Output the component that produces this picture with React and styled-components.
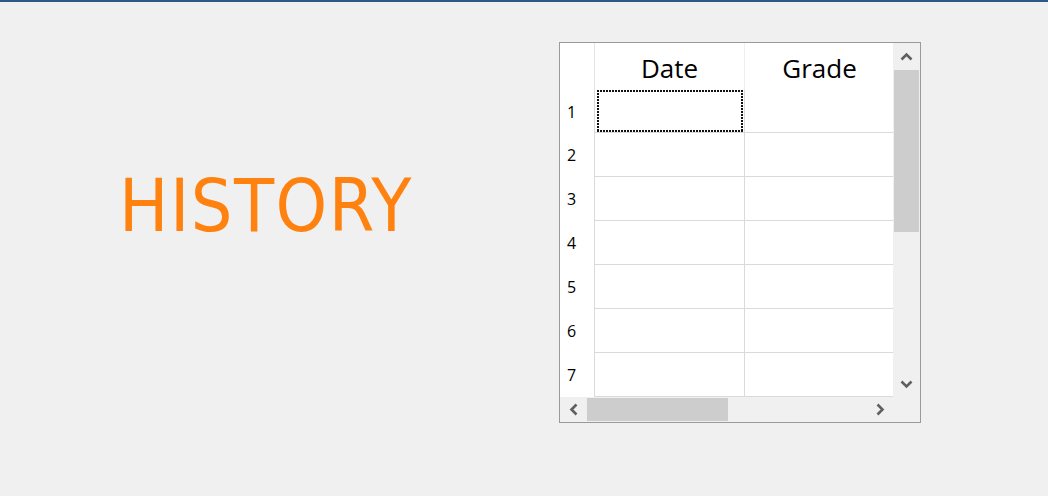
import React from "react";
import styled, { createGlobalStyle } from "styled-components";

const GlobalStyle = createGlobalStyle`
  html, body {
    margin: 0;
    padding: 0;
    background: #f0f0f0;
  }
`;

const Page = styled.div`
  box-sizing: border-box;
  height: 496px;
  border-top: 2px solid #2b5a86;
  display: flex;
  padding-top: 40px;
`;

const TitlePane = styled.div`
  width: 559px;
  padding-left: 119px;
  box-sizing: border-box;
`;

const Title = styled.h1`
  margin: 127px 0 0 0;
  font-family: "DejaVu Sans Condensed", "DejaVu Sans", sans-serif;
  font-stretch: condensed;
  font-weight: normal;
  font-size: 73px;
  line-height: 1;
  letter-spacing: 1.5px;
  color: #ff8210;
`;

const GridBox = styled.div`
  width: 362px;
  height: 381px;
  box-sizing: border-box;
  border: 1px solid #9a9a9a;
  display: grid;
  grid-template-columns: 333px 27px;
  grid-template-rows: 354px 25px;
  background: #f0f0f0;
`;

const Table = styled.div`
  background: #fff;
  overflow: hidden;
  display: grid;
  grid-template-columns: 35px 150px 150px;
  grid-template-rows: 47px 43px repeat(6, 44px);
  font-family: "Open Sans", "Noto Sans", sans-serif;
  color: #000;
`;

const HeadCell = styled.div`
  box-sizing: border-box;
  border-right: 1px solid ${(p) => (p.$blank ? "#e4e4e4" : "#efefef")};
  display: flex;
  align-items: center;
  justify-content: center;
  padding-top: 2px;
  font-size: 26px;
`;

const RowHead = styled.div`
  box-sizing: border-box;
  border-right: 1px solid #dadada;
  display: flex;
  align-items: center;
  padding-left: 7px;
  font-size: 16px;
`;

const dotsH = "repeating-linear-gradient(90deg, #111 0 2px, transparent 2px 3px)";
const dotsV = "repeating-linear-gradient(180deg, #111 0 2px, transparent 2px 3px)";

const Cell = styled.div`
  position: relative;
  box-sizing: border-box;
  border-right: 1px solid #dadada;
  border-bottom: 1px solid #dadada;

  ${(p) =>
    p.$focused &&
    `
    &::after {
      content: "";
      position: absolute;
      top: 0;
      bottom: 0;
      left: 2px;
      right: 1px;
      background:
        ${dotsH} top left / 100% 2px no-repeat,
        ${dotsH} bottom left / 100% 2px no-repeat,
        ${dotsV} top left / 2px 100% no-repeat,
        ${dotsV} top right / 2px 100% no-repeat;
    }
  `}
`;

const VScroll = styled.div`
  display: flex;
  flex-direction: column;
  background: #f0f0f0;
`;

const HScroll = styled.div`
  display: flex;
  background: #f0f0f0;
`;

const ArrowButton = styled.div`
  flex: 0 0 27px;
  height: ${(p) => (p.$vertical ? "27px" : "auto")};
  display: flex;
  align-items: center;
  justify-content: center;
`;

const Track = styled.div`
  flex: 1;
  display: flex;
  flex-direction: ${(p) => (p.$vertical ? "column" : "row")};
`;

const Thumb = styled.div`
  background: #cdcdcd;
  ${(p) =>
    p.$vertical
      ? `height: 162px; margin: 0 1px;`
      : `width: 141px; margin: 1px 0;`}
`;

const Corner = styled.div`
  background: #f0f0f0;
`;

const Chevron = ({ dir }) => {
  const pts = {
    up: "1.5,7.5 6.5,2.5 11.5,7.5",
    down: "1.5,2.5 6.5,7.5 11.5,2.5",
    left: "7.5,1.5 2.5,6.5 7.5,11.5",
    right: "2.5,1.5 7.5,6.5 2.5,11.5",
  }[dir];
  const vertical = dir === "up" || dir === "down";
  return (
    <svg
      width={vertical ? 13 : 10}
      height={vertical ? 10 : 13}
      viewBox={vertical ? "0 0 13 10" : "0 0 10 13"}
    >
      <polyline
        points={pts}
        fill="none"
        stroke="#606060"
        strokeWidth="2.6"
      />
    </svg>
  );
};

const rows = [1, 2, 3, 4, 5, 6, 7];

const App = () => {
  return (
    <>
      <GlobalStyle />
      <Page>
        <TitlePane>
          <Title>HISTORY</Title>
        </TitlePane>
        <GridBox>
          <Table>
            <HeadCell $blank />
            <HeadCell>Date</HeadCell>
            <HeadCell>Grade</HeadCell>
            {rows.map((n) => (
              <React.Fragment key={n}>
                <RowHead>{n}</RowHead>
                <Cell $focused={n === 1} />
                <Cell />
              </React.Fragment>
            ))}
          </Table>
          <VScroll>
            <ArrowButton $vertical>
              <Chevron dir="up" />
            </ArrowButton>
            <Track $vertical>
              <Thumb $vertical />
            </Track>
            <ArrowButton $vertical>
              <Chevron dir="down" />
            </ArrowButton>
          </VScroll>
          <HScroll>
            <ArrowButton>
              <Chevron dir="left" />
            </ArrowButton>
            <Track>
              <Thumb />
            </Track>
            <ArrowButton>
              <Chevron dir="right" />
            </ArrowButton>
          </HScroll>
          <Corner />
        </GridBox>
      </Page>
    </>
  );
};

export default App;
